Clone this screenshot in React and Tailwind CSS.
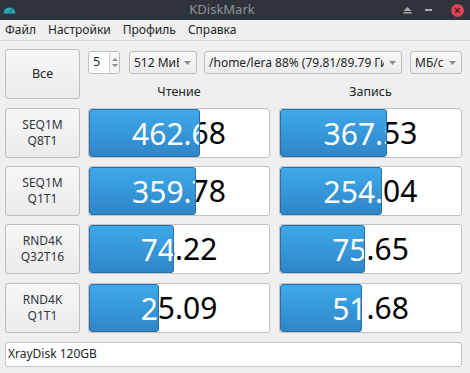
import React from 'react';

const rows = [
  { name: ['SEQ1M', 'Q8T1'], read: '462.68', readFill: 111, write: '367.53', writeFill: 107 },
  { name: ['SEQ1M', 'Q1T1'], read: '359.78', readFill: 107, write: '254.04', writeFill: 102 },
  { name: ['RND4K', 'Q32T16'], read: '74.22', readFill: 85, write: '75.65', writeFill: 85 },
  { name: ['RND4K', 'Q1T1'], read: '25.09', readFill: 70, write: '51.68', writeFill: 82 },
];

// Value box with blue fill; the text shows white over the fill and black elsewhere
const Bar = ({ value, fill, width }) => (
  <div
    className="relative h-[50px] bg-white border border-[#c2c4c6] rounded-[3px] overflow-hidden"
    style={{ width }}
  >
    <div className="absolute inset-0 flex items-center justify-center text-[30px] text-black leading-none">
      {value}
    </div>
    <div
      className="absolute left-0 top-0 bottom-0 overflow-hidden rounded-[3px] border border-[#2a6fa8] bg-gradient-to-b from-[#3da9ea] to-[#2f86c8]"
      style={{ width: fill }}
    >
      <div
        className="absolute -left-px -top-px h-[50px] flex items-center justify-center text-[30px] text-white leading-none"
        style={{ width: width - 2 }}
      >
        {value}
      </div>
    </div>
  </div>
);

const Combo = ({ children, width }) => (
  <div
    className="h-[23px] flex items-center pl-[4px] pr-[5px] border border-[#bcbebf] rounded-[3px] bg-gradient-to-b from-[#f7f7f7] to-[#ebebeb] text-[12px] text-[#232627]"
    style={{ width }}
  >
    <div className="flex-1 overflow-hidden whitespace-nowrap">{children}</div>
    <svg width="7" height="4" viewBox="0 0 7 4" className="ml-[5px] shrink-0">
      <path d="M0 0 L7 0 L3.5 4 Z" fill="#8a8d8f" />
    </svg>
  </div>
);

const App = () => {
  return (
    <div
      className="w-[470px] h-[373px] bg-[#efefef] overflow-hidden text-[#232627]"
      style={{ fontFamily: '"Noto Sans", "Open Sans", sans-serif' }}
    >
      {/* title bar */}
      <div className="relative h-[20px] bg-[#2f343b] flex items-center justify-center">
        <svg width="13" height="9" viewBox="0 0 13 9" className="absolute left-[3px] top-[5px]">
          <path d="M0.5 8.5 A6 6 0 0 1 12.5 8.5 Z" fill="#27a9b8" />
          <path d="M6.5 8 L9 4" stroke="#1b6f7a" strokeWidth="1.2" />
        </svg>
        <span className="text-[13px] text-[#8e9398] -ml-[26px]">KDiskMark</span>
        <div className="absolute right-0 top-0 h-[20px] flex items-center">
          <svg width="9" height="7" viewBox="0 0 9 7" className="mr-[13px]">
            <path d="M0.5 4 L4.5 0 L8.5 4 Z" fill="#a9adb1" />
            <rect x="0.5" y="5" width="8" height="1.5" fill="#a9adb1" />
          </svg>
          <div className="w-[7px] h-[1.5px] bg-[#a9adb1] mr-[19px]" />
          <svg width="13" height="13" viewBox="0 0 13 13" className="mr-[6px]">
            <circle cx="6.5" cy="6.5" r="6.5" fill="#da4453" />
            <path d="M4.3 4.3 L8.7 8.7 M8.7 4.3 L4.3 8.7" stroke="#5a1c22" strokeWidth="1.5" />
          </svg>
        </div>
      </div>

      {/* menu bar */}
      <div className="h-[21px] flex items-center gap-[12px] px-[5px] text-[12px] border-b border-[#d6d6d6]">
        <span>Файл</span>
        <span>Настройки</span>
        <span>Профиль</span>
        <span>Справка</span>
      </div>

      <div className="px-[5px] pt-[8px]">
        {/* controls */}
        <div className="flex gap-[8px]">
          <button className="w-[75px] h-[50px] border border-[#bcbebf] rounded-[3px] bg-gradient-to-b from-[#f7f7f7] to-[#ebebeb] text-[12.5px]">
            Все
          </button>
          <div className="flex-1 flex flex-col">
            <div className="mt-[2px] flex items-center">
              <div className="w-[32px] h-[23px] flex border border-[#bcbebf] rounded-[3px] bg-white overflow-hidden">
                <div className="flex-1 flex items-center pl-[4px] text-[12.5px]">5</div>
                <div className="w-[10px] border-l border-[#d3d3d3] bg-[#f5f5f5] flex flex-col items-center justify-center gap-[3px]">
                  <svg width="6" height="3" viewBox="0 0 6 3"><path d="M0 3 L3 0 L6 3 Z" fill="#8a8d8f" /></svg>
                  <svg width="6" height="3" viewBox="0 0 6 3"><path d="M0 0 L6 0 L3 3 Z" fill="#8a8d8f" /></svg>
                </div>
              </div>
              <div className="ml-[9px]">
                <Combo width={68}>512 МиБ</Combo>
              </div>
              <div className="ml-[7px]">
                <Combo width={198}>/home/lera 88% (79.81/89.79 ГиБ)</Combo>
              </div>
              <div className="ml-[8px]">
                <Combo width={52}>МБ/с</Combo>
              </div>
            </div>
            <div className="flex gap-[9px] mt-[9px] text-[12.5px]">
              <div className="w-[182px] text-center">Чтение</div>
              <div className="w-[183px] text-center">Запись</div>
            </div>
          </div>
        </div>

        {/* results */}
        <div className="flex flex-col gap-[8.33px] mt-[6px]">
          {rows.map((r) => (
            <div key={r.name.join()} className="flex">
              <div className="w-[75px] h-[50px] flex flex-col items-center justify-center border border-[#bcbebf] rounded-[3px] bg-gradient-to-b from-[#f7f7f7] to-[#ebebeb] text-[12px] leading-[16px] text-[#31363b]">
                <span>{r.name[0]}</span>
                <span>{r.name[1]}</span>
              </div>
              <div className="ml-[8px]">
                <Bar value={r.read} fill={r.readFill} width={182} />
              </div>
              <div className="ml-[9px]">
                <Bar value={r.write} fill={r.writeFill} width={183} />
              </div>
            </div>
          ))}
        </div>

        {/* disk name */}
        <div className="mt-[9px] h-[25px] w-[457px] flex items-center px-[2px] bg-white border border-[#c2c4c6] rounded-[3px] text-[12px]">
          XrayDisk 120GB
        </div>
      </div>
    </div>
  );
};

export default App;
